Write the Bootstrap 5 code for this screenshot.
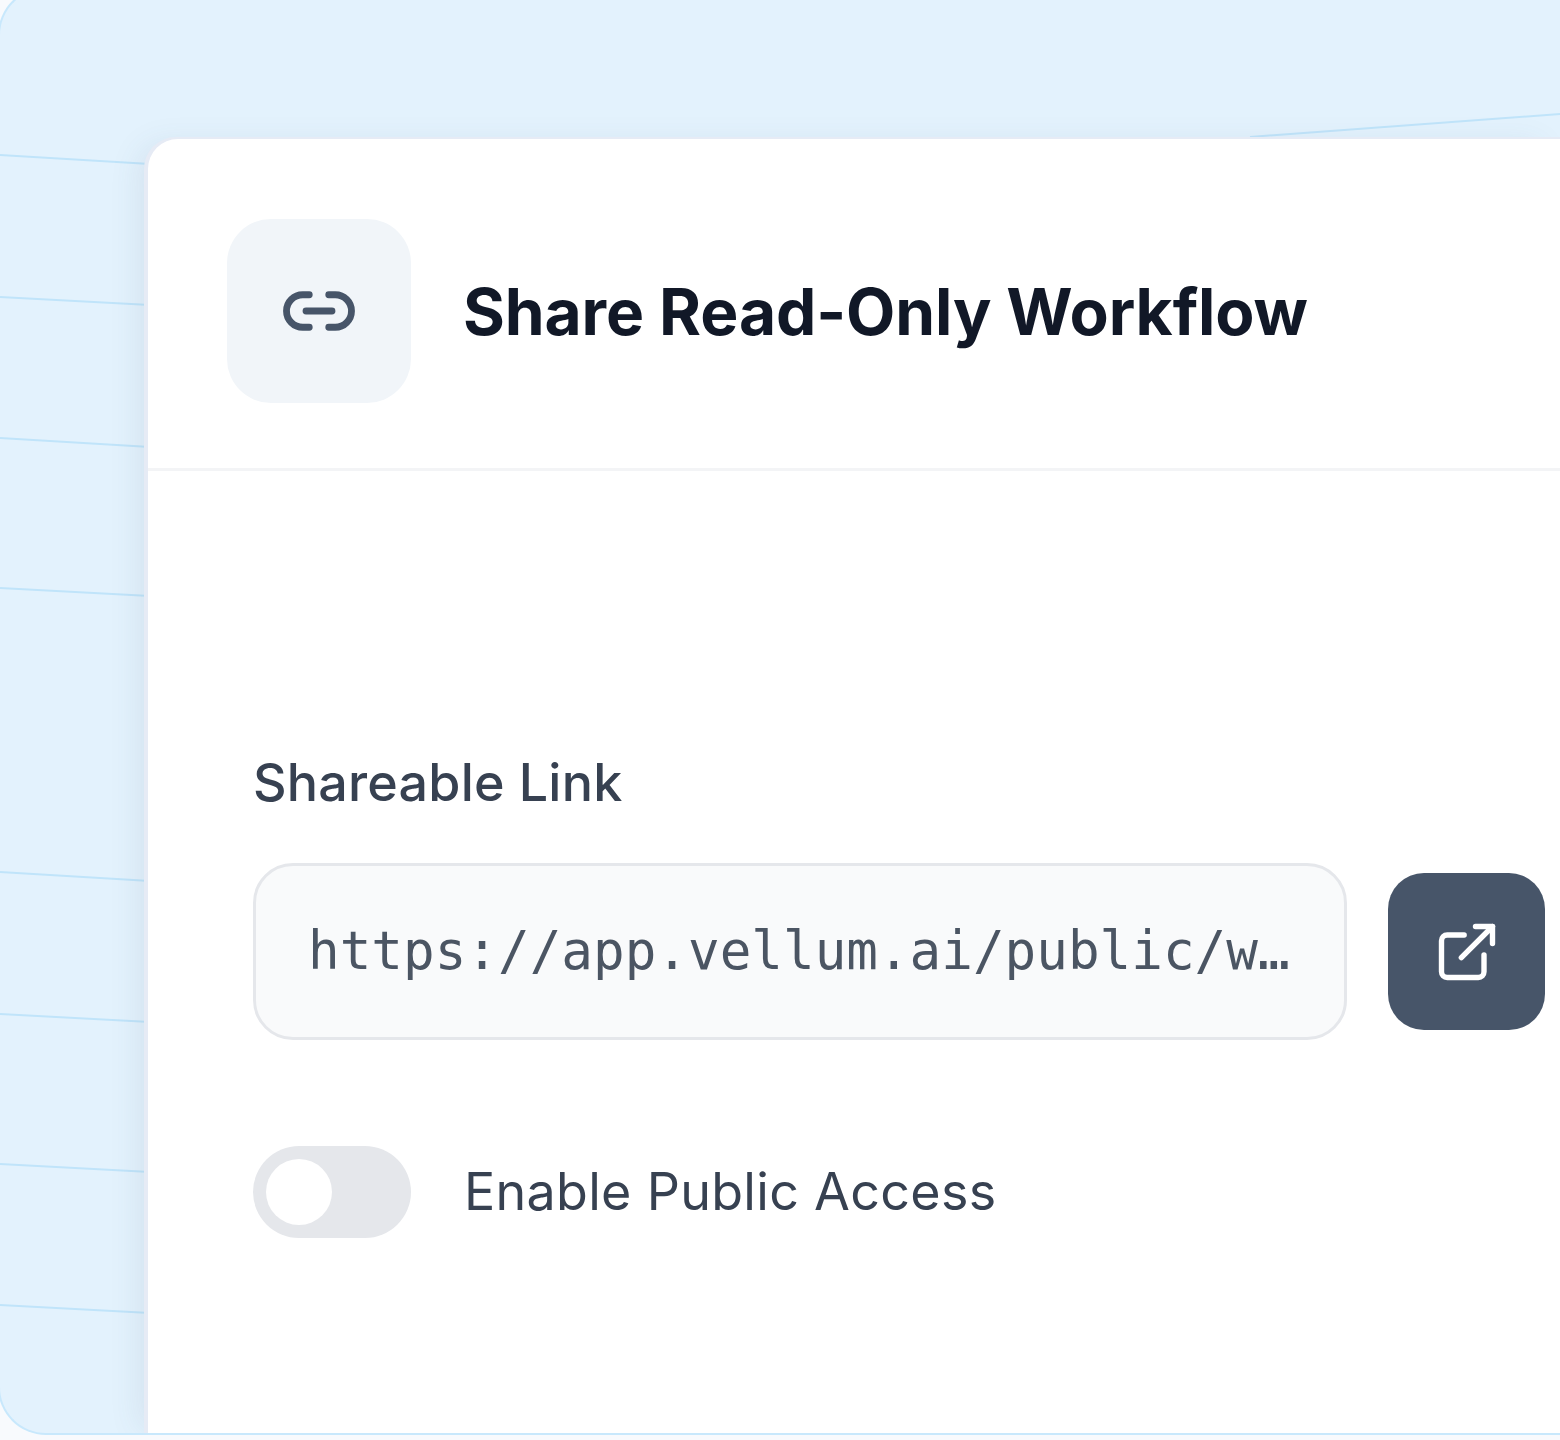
<!DOCTYPE html>
<html lang="en">
<head>
    <meta charset="UTF-8">
    <meta name="viewport" content="width=device-width, initial-scale=1.0">
    <title>Share Read-Only Workflow</title>
    <link rel="stylesheet" href="https://cdn.jsdelivr.net/npm/bootstrap@5.3.0/dist/css/bootstrap.min.css">
    <style>
        html, body {
            height: 1440px;
            overflow: hidden;
        }
        body {
            background-color: #f8fafd;
            font-family: Inter, "Liberation Sans", sans-serif;
        }
        .backdrop {
            position: relative;
            width: 1562px;
            height: 1448px;
            margin: -13px 0 0 -2px;
            padding: 152px 0 0 148px;
            background-color: #e3f2fd;
            border: 2px solid #c8e8fc;
            border-right: 0;
            border-radius: 48px 0 0 48px;
            overflow: hidden;
        }
        .backdrop-lines {
            position: absolute;
            top: 11px;
            left: 0;
        }
        .backdrop-lines line {
            stroke: #c0e4fa;
            stroke-width: 2;
        }
        .share-card {
            position: relative;
            width: 1412px;
            height: 1296px;
            margin-top: -2px;
            background-color: #fff;
            border: 0;
            border-radius: 30px 0 0 0;
            box-shadow: -2px 0 0 2px #e6ebf5, -14px 0 32px -6px rgba(71, 85, 105, .1);
        }
        .share-head {
            padding: 80px 0 65px 79px;
            border-bottom: 3px solid #f3f4f6;
            gap: 52px;
        }
        .icon-tile {
            width: 184px;
            height: 184px;
            background-color: #f1f5f9;
            border-radius: 44px;
        }
        .share-title {
            margin: 0;
            padding-top: 2px;
            color: #111827;
            font-size: 64px;
            font-weight: 700;
            letter-spacing: -0.1px;
        }
        .share-body {
            padding: 283px 15px 0 105px;
        }
        .field-label {
            margin-bottom: 51px;
            color: #374151;
            font-size: 52px;
            font-weight: 500;
            line-height: 58px;
            letter-spacing: 0.2px;
        }
        .link-box {
            width: 1094px;
            height: 177px;
            padding: 0 52px;
            background-color: #f9fafb;
            border: 3px solid #e5e7eb;
            border-radius: 40px;
            color: #4b5563;
            font-family: "DejaVu Sans Mono", "Liberation Mono", monospace;
            font-size: 52.6px;
            white-space: nowrap;
        }
        .open-btn {
            width: 157px;
            height: 157px;
            padding: 0;
            background-color: #475569;
            border: 0;
            border-radius: 36px;
        }
        .access-row {
            margin-top: 106px;
            gap: 53px;
            color: #374151;
            font-size: 52px;
            letter-spacing: 0.3px;
        }
        .toggle-track {
            width: 158px;
            height: 92px;
            padding: 13px;
            background-color: #e5e7eb;
            border-radius: 46px;
        }
        .toggle-knob {
            width: 66px;
            height: 66px;
            background-color: #fff;
            border-radius: 50%;
        }
    </style>
</head>
<body>
    <div class="backdrop">
        <!-- faint diagram lines behind the card -->
        <svg class="backdrop-lines" width="1560" height="1440" viewBox="0 0 1560 1440" fill="none">
            <line x1="0" y1="155" x2="150" y2="164"/>
            <line x1="0" y1="297" x2="150" y2="305"/>
            <line x1="0" y1="438" x2="150" y2="447"/>
            <line x1="0" y1="588" x2="150" y2="596"/>
            <line x1="0" y1="872" x2="150" y2="881"/>
            <line x1="0" y1="1014" x2="150" y2="1022"/>
            <line x1="0" y1="1164" x2="150" y2="1172"/>
            <line x1="0" y1="1305" x2="150" y2="1313"/>
            <line x1="1250" y1="137" x2="1560" y2="114"/>
        </svg>

        <div class="card share-card">
            <div class="share-head d-flex align-items-center">
                <div class="icon-tile d-flex align-items-center justify-content-center">
                    <svg width="78" height="78" viewBox="0 0 24 24" fill="none" stroke="#475569" stroke-width="2.1" stroke-linecap="round" stroke-linejoin="round">
                        <path d="M9 17H7A5 5 0 0 1 7 7h2"/>
                        <path d="M15 7h2a5 5 0 1 1 0 10h-2"/>
                        <line x1="8" y1="12" x2="16" y2="12"/>
                    </svg>
                </div>
                <h1 class="share-title">Share Read-Only Workflow</h1>
            </div>
            <div class="share-body">
                <div class="field-label">Shareable Link</div>
                <div class="d-flex align-items-center justify-content-between">
                    <div class="link-box d-flex align-items-center flex-shrink-0">https://app.vellum.ai/public/w…</div>
                    <button type="button" class="btn open-btn d-flex align-items-center justify-content-center flex-shrink-0">
                        <svg width="68" height="68" viewBox="0 0 24 24" fill="none" stroke="#fff" stroke-width="1.9" stroke-linecap="round" stroke-linejoin="round">
                            <path d="M15 3h6v6"/>
                            <path d="M10 14 21 3"/>
                            <path d="M18 13v6a2 2 0 0 1-2 2H5a2 2 0 0 1-2-2V8a2 2 0 0 1 2-2h6"/>
                        </svg>
                    </button>
                </div>
                <div class="access-row d-flex align-items-center">
                    <div class="toggle-track"><div class="toggle-knob"></div></div>
                    <span>Enable Public Access</span>
                </div>
            </div>
        </div>
    </div>
    <script src="https://cdn.jsdelivr.net/npm/bootstrap@5.3.0/dist/js/bootstrap.bundle.min.js"></script>
</body>
</html>
